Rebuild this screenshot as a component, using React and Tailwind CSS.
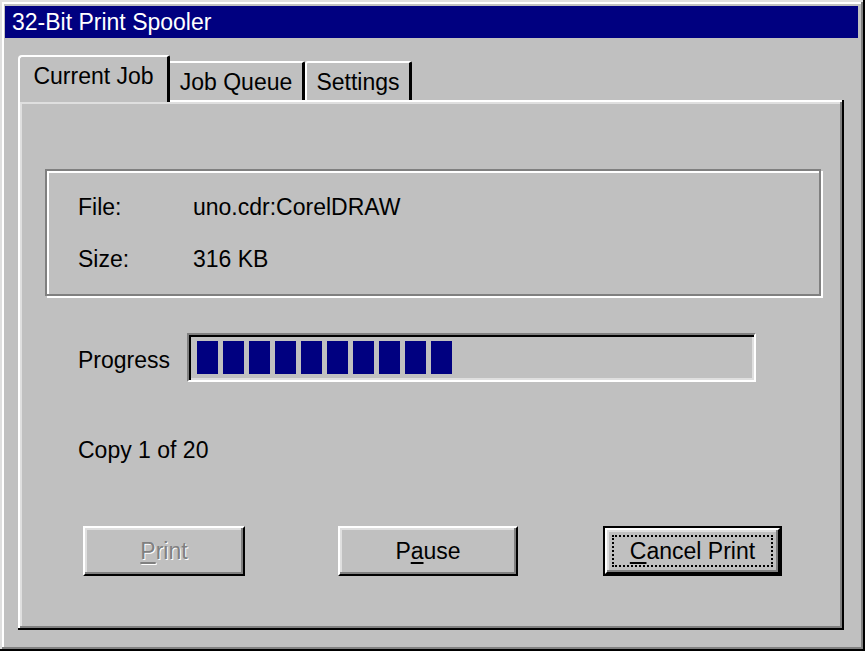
import React from "react";

const FONT = "font-['Liberation_Sans',Arial,sans-serif]";

const Mn = ({ children }) => <span className="underline underline-offset-[3px]">{children}</span>;

// raised Win95 button, optional default (black frame) and focus rectangle
const Button = ({ children, width, isDefault, focused, disabled }) => (
  <div
    className={`relative h-[50px] ${width} ${
      isDefault ? "border-2 border-black" : ""
    }`}
  >
    <div className="h-full w-full border-2 border-t-white border-l-white border-r-black border-b-black bg-[#c0c0c0] shadow-[inset_-2px_-2px_0_#808080,inset_2px_2px_0_#dfdfdf] flex items-center justify-center">
      <span
        className={`text-[23px] leading-none ${
          disabled ? "text-[#808080] [text-shadow:1px_1px_0_#fff]" : "text-black"
        }`}
      >
        {children}
      </span>
    </div>
    {focused && (
      <div className="absolute inset-[7px] border-2 border-dotted border-black pointer-events-none" />
    )}
  </div>
);

const Tab = ({ label, active, width }) =>
  active ? (
    <div
      className={`relative z-10 ${width} h-[47px] -mb-[2px] bg-[#c0c0c0] border-l-2 border-t-2 border-r-[3px] border-l-white border-t-white border-r-black rounded-tl-[4px] rounded-tr-[2px] flex items-center justify-center pb-[6px]`}
    >
      <span className="text-[23px] leading-none">{label}</span>
    </div>
  ) : (
    <div
      className={`${width} h-[39px] bg-[#c0c0c0] border-t-2 border-t-white border-r-[3px] border-r-black rounded-tr-[2px] flex items-center justify-center pt-[2px] ${
        label === "Settings" ? "border-l-2 border-l-white rounded-tl-[3px]" : ""
      }`}
    >
      <span className="text-[23px] leading-none">{label}</span>
    </div>
  );

const App = () => {
  const blocks = Array.from({ length: 10 });

  return (
    <div
      className={`${FONT} w-[865px] h-[651px] bg-[#c0c0c0] text-black pl-[5px] pt-[6px] shadow-[inset_-2px_-2px_0_#000,inset_2px_2px_0_#dfdfdf,inset_-4px_-4px_0_#808080,inset_4px_4px_0_#fff]`}
    >
      {/* title bar */}
      <div className="w-[853px] h-[32px] bg-[#000080] flex items-center pl-[7px]">
        <span className="text-white text-[23px] leading-none">32-Bit Print Spooler</span>
      </div>

      {/* tabs */}
      <div className="ml-[13px] mt-[17px] h-[45px] flex items-end">
        <Tab label="Current Job" active width="w-[152px]" />
        <Tab label="Job Queue" width="w-[135px]" />
        <Tab label="Settings" width="w-[107px]" />
      </div>

      {/* tab panel */}
      <div className="ml-[13px] w-[826px] h-[530px] flex flex-col shadow-[inset_-2px_-2px_0_#000,inset_2px_2px_0_#fff,inset_-4px_-4px_0_#808080,inset_4px_4px_0_#dfdfdf]">
        {/* file info group */}
        <div className="ml-[27px] mt-[69px] w-[776px] h-[127px] border-2 border-[#808080] shadow-[inset_2px_2px_0_#fff,2px_2px_0_#fff] pl-[31px] pt-[25px] flex flex-col gap-[29px]">
          <div className="flex text-[23px] leading-none">
            <span className="w-[115px]">File:</span>
            <span>uno.cdr:CorelDRAW</span>
          </div>
          <div className="flex text-[23px] leading-none">
            <span className="w-[115px]">Size:</span>
            <span>316 KB</span>
          </div>
        </div>

        {/* progress */}
        <div className="ml-[60px] mt-[37px] flex items-center">
          <span className="w-[109px] text-[23px] leading-none mt-[6px]">Progress</span>
          <div className="w-[569px] h-[49px] border-2 border-t-[#808080] border-l-[#808080] border-r-white border-b-white shadow-[inset_2px_2px_0_#000,inset_-2px_-2px_0_#dfdfdf] flex items-center gap-[5px] pl-[8px]">
            {blocks.map((_, i) => (
              <div key={i} className="w-[21px] h-[33px] bg-[#000080]" />
            ))}
          </div>
        </div>

        <div className="ml-[60px] mt-[57px] text-[23px] leading-none">Copy 1 of 20</div>

        {/* buttons */}
        <div className="mt-[64px] flex">
          <div className="ml-[65px]">
            <Button width="w-[162px]" disabled>
              <Mn>P</Mn>rint
            </Button>
          </div>
          <div className="ml-[93px]">
            <Button width="w-[180px]">
              P<Mn>a</Mn>use
            </Button>
          </div>
          <div className="ml-[85px]">
            <Button width="w-[179px]" isDefault focused>
              <Mn>C</Mn>ancel Print
            </Button>
          </div>
        </div>
      </div>
    </div>
  );
};

export default App;
